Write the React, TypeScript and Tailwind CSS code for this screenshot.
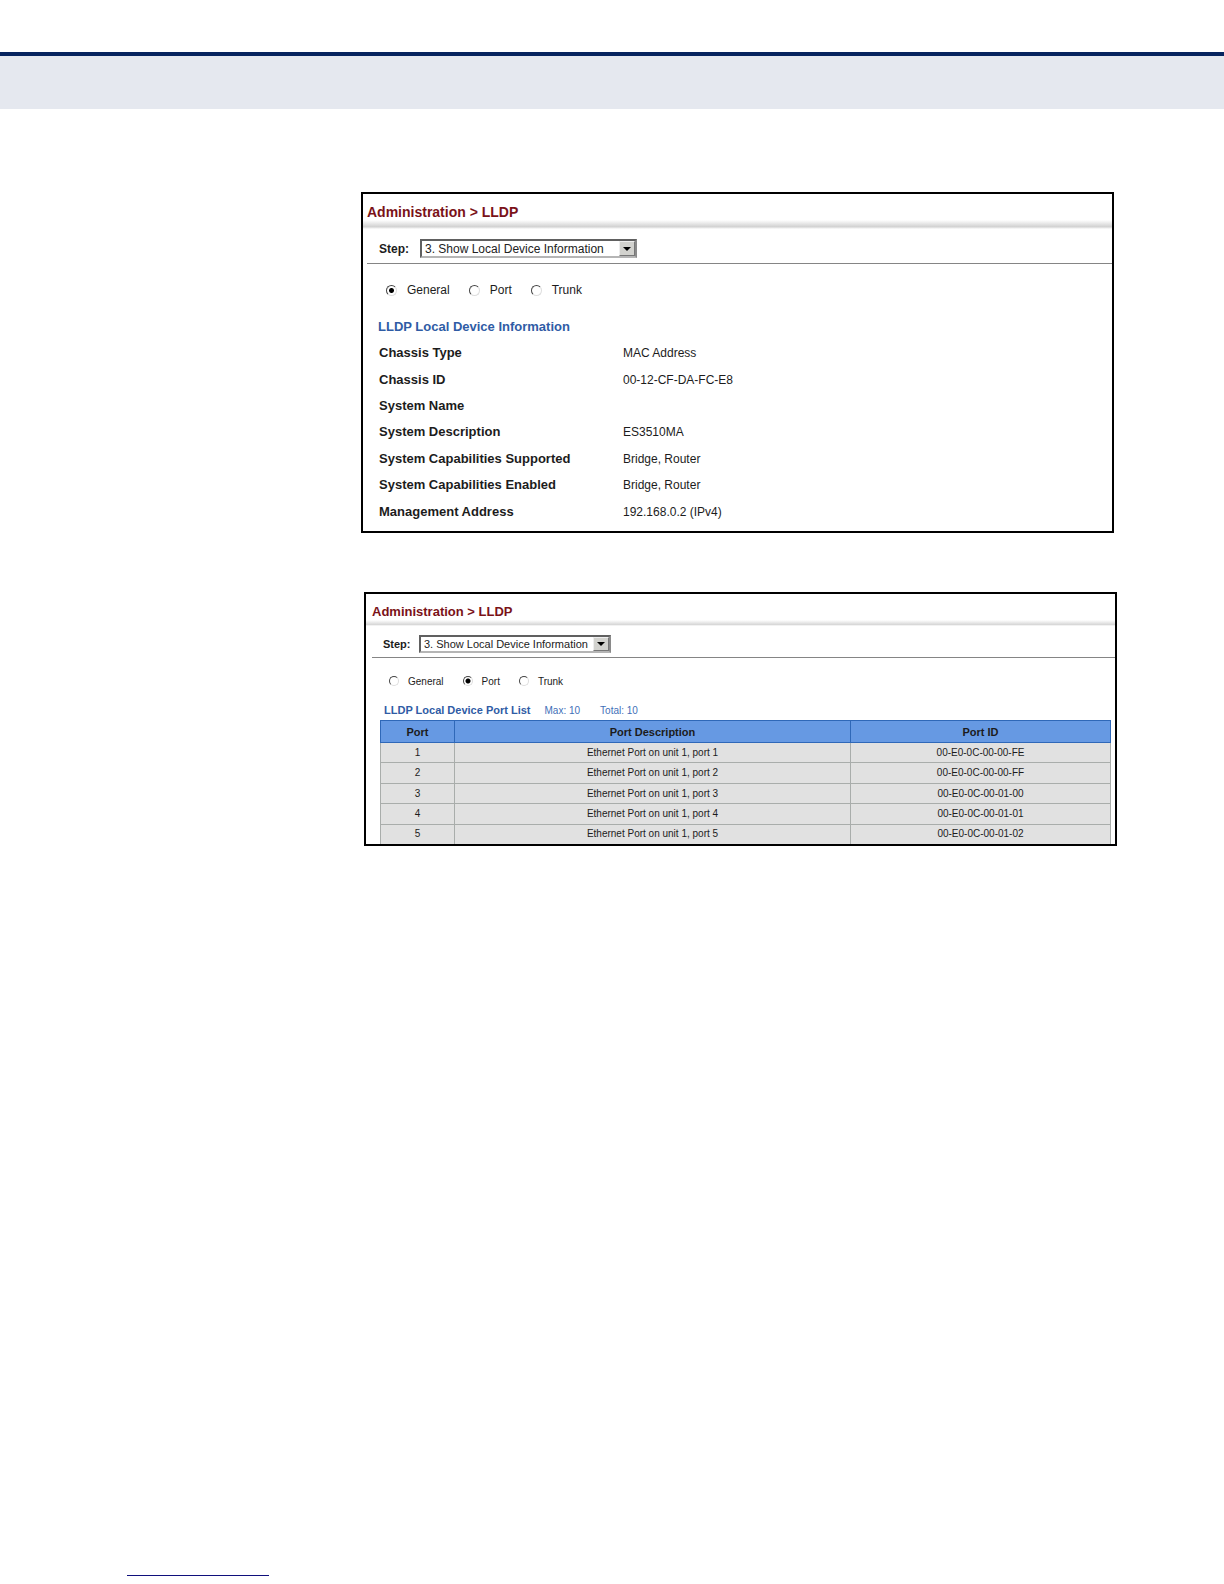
import { useState } from "react";

const views = ["General", "Port", "Trunk"];

const deviceInfo = [
  { label: "Chassis Type", value: "MAC Address" },
  { label: "Chassis ID", value: "00-12-CF-DA-FC-E8" },
  { label: "System Name", value: "" },
  { label: "System Description", value: "ES3510MA" },
  { label: "System Capabilities Supported", value: "Bridge, Router" },
  { label: "System Capabilities Enabled", value: "Bridge, Router" },
  { label: "Management Address", value: "192.168.0.2 (IPv4)" },
];

const ports = [
  { port: 1, id: "00-E0-0C-00-00-FE" },
  { port: 2, id: "00-E0-0C-00-00-FF" },
  { port: 3, id: "00-E0-0C-00-01-00" },
  { port: 4, id: "00-E0-0C-00-01-01" },
  { port: 5, id: "00-E0-0C-00-01-02" },
];

interface StepSelectProps {
  id: string;
  compact?: boolean;
}

function StepSelect({ id, compact }: StepSelectProps) {
  return (
    <div
      className={
        compact
          ? "ml-[6px] flex items-center border-b border-[#858585] pt-[9px] pb-1 pl-[11px] text-[11px]"
          : "ml-1 flex items-center border-b border-[#858585] pt-[10px] pb-[5px] pl-3 text-[12px]"
      }
    >
      <label htmlFor={id} className={compact ? "w-9 font-bold" : "w-[41px] font-bold"}>
        Step:
      </label>
      <div className={compact ? "relative h-[18px] w-48" : "relative h-[19px] w-[217px]"}>
        <select
          id={id}
          className="block h-full w-full appearance-none border-2 border-t-[#606060] border-r-[#8a8a8a] border-b-[#b5b5b5] border-l-[#606060] bg-white pl-[3px] leading-none text-[#222]"
        >
          <option>3. Show Local Device Information</option>
        </select>
        <span className="pointer-events-none absolute top-[2px] right-[2px] bottom-[2px] flex w-4 items-center justify-center border border-t-[#eee] border-r-[#777] border-b-[#777] border-l-[#eee] bg-[#d2d2ce]">
          <svg width="8" height="4" viewBox="0 0 8 4" aria-hidden="true">
            <path d="M0 0h8L4 4z" fill="#000" />
          </svg>
        </span>
      </div>
    </div>
  );
}

interface ViewRadiosProps {
  name: string;
  initial: string;
  compact?: boolean;
}

function ViewRadios({ name, initial, compact }: ViewRadiosProps) {
  const [view, setView] = useState(initial);

  return (
    <div
      className={
        compact
          ? "flex h-[46px] items-center gap-[19px] pl-[23px] text-[10px]"
          : "flex h-[52px] items-center gap-[19px] pl-[23px] text-[12px]"
      }
    >
      {views.map((v) => (
        <label key={v} className={compact ? "flex items-center gap-[9px]" : "flex items-center gap-[10px]"}>
          <input
            type="radio"
            name={name}
            checked={view === v}
            onChange={() => setView(v)}
            className={
              (compact ? "size-[10px]" : "size-[11px]") +
              " appearance-none rounded-full border border-t-[#444] border-r-[#ddd] border-b-[#ddd] border-l-[#444] bg-white checked:bg-[radial-gradient(circle,#000_2px,#fff_3px)]"
            }
          />
          {v}
        </label>
      ))}
    </div>
  );
}

export default function App() {
  return (
    <div className="flex min-h-screen flex-col bg-white font-['Liberation_Sans',Arial,sans-serif] text-[#1c1c1c]">
      <header className="mt-[52px] h-[57px] border-t-4 border-[#06245f] bg-[#e5e8ef]" />

      <main className="flex flex-col">
        <section className="mt-[83px] mr-[110px] ml-[361px] border-2 border-black pb-[6px]">
          <h1 className="h-[26px] pl-1 text-[14px] leading-9 font-bold text-[#7a1218]">
            Administration &gt; LLDP
          </h1>
          <div className="h-[9px] bg-linear-to-b from-white via-[#d2d2d2] via-75% to-white" />
          <StepSelect id="step-general" />
          <ViewRadios name="view-general" initial="General" />
          <h2 className="ml-[15px] h-6 text-[13px] leading-[22px] font-bold text-[#2f5ca5]">
            LLDP Local Device Information
          </h2>
          <table className="ml-4 h-[185px] text-left">
            <tbody>
              {deviceInfo.map((row) => (
                <tr key={row.label}>
                  <th scope="row" className="w-[244px] p-0 text-[13px] leading-5 font-bold">
                    {row.label}
                  </th>
                  <td className="p-0 text-[12px] leading-5">{row.value}</td>
                </tr>
              ))}
            </tbody>
          </table>
        </section>

        <section className="mt-[59px] mr-[107px] ml-[364px] border-2 border-black">
          <h1 className="h-[26px] pl-[6px] text-[13px] leading-[35px] font-bold text-[#7a1218]">
            Administration &gt; LLDP
          </h1>
          <div className="h-[6px] bg-linear-to-b from-white via-[#d8d8d8] via-75% to-white" />
          <StepSelect id="step-port" compact />
          <ViewRadios name="view-port" initial="Port" compact />
          <div className="flex h-4 items-baseline pl-[18px] text-[10px] leading-3 text-[#3f6fb8]">
            <h2 className="text-[11px] font-bold text-[#2f5ca5]">LLDP Local Device Port List</h2>
            <span className="ml-[14px]">Max: 10</span>
            <span className="ml-5">Total: 10</span>
          </div>
          <div className="mr-1 ml-[14px]">
            <table className="h-[124px] w-full table-fixed border-collapse text-center text-[10px] leading-4">
              <colgroup>
                <col className="w-[74px]" />
                <col />
                <col className="w-[260px]" />
              </colgroup>
              <thead>
                <tr className="h-[22px] bg-[#6699e3] text-[11px]">
                  <th scope="col" className="border border-[#2f68b8] p-0">Port</th>
                  <th scope="col" className="border border-[#2f68b8] p-0">Port Description</th>
                  <th scope="col" className="border border-[#2f68b8] p-0">Port ID</th>
                </tr>
              </thead>
              <tbody className="bg-[#e1e1e1]">
                {ports.map((row) => (
                  <tr key={row.port}>
                    <td className="border border-b-0 border-[#a9adab] p-0">{row.port}</td>
                    <td className="border border-b-0 border-[#a9adab] p-0">
                      Ethernet Port on unit 1, port {row.port}
                    </td>
                    <td className="border border-b-0 border-[#a9adab] p-0">{row.id}</td>
                  </tr>
                ))}
              </tbody>
            </table>
          </div>
        </section>
      </main>

      <footer className="mt-auto pb-2 pl-[127px]">
        <hr className="h-px w-[142px] border-0 bg-[#10107c]" />
      </footer>
    </div>
  );
}
